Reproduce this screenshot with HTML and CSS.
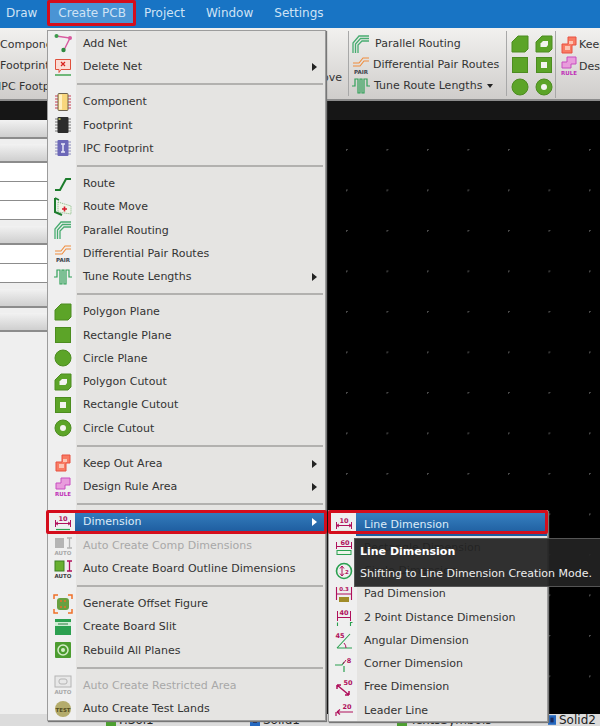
FILE: index.html
```html
<!DOCTYPE html>
<html lang="en">
<head>
<meta charset="utf-8">
<title>Create PCB menu</title>
<link rel="stylesheet" href="styles.css">
</head>
<body>
<svg class="defs" xmlns="http://www.w3.org/2000/svg">
  <symbol id="i-addnet" viewBox="0 0 20 20"><path d="M3 3 17 5 11 17" fill="none" stroke="#d85aa0" stroke-width="1.4"/><circle cx="3.5" cy="3" r="2" fill="#3c9a4c"/><circle cx="17" cy="5" r="2" fill="#d85aa0"/><circle cx="10.500" cy="17" r="2.200" fill="#2f8a40"/></symbol>
  <symbol id="i-delnet" viewBox="0 0 20 20"><path d="M2.500 2.500H17.500V12.500H8L6 15.500V12.500H2.500Z" fill="#fbdcd4" stroke="#e0503c"/><path d="M8 5 12 9M12 5 8 9" stroke="#d8201c" stroke-width="1.200"/><path d="M2 18H18" stroke="#2a9a3c" stroke-width="1.300"/></symbol>
  <symbol id="i-comp" viewBox="0 0 20 20"><path d="M2 4H18M2 7H18M2 10H18M2 13H18M2 16H18" stroke="#c83c50"/><rect x="5" y="1.500" width="10" height="17" rx="1" fill="#f8d67c" stroke="#6c6250"/><rect x="6" y="2.500" width="3" height="15" fill="#fff0c0"/></symbol>
  <symbol id="i-foot" viewBox="0 0 20 20"><path d="M2 4H18M2 7H18M2 10H18M2 13H18M2 16H18" stroke="#777"/><rect x="4.500" y="2" width="11" height="16" rx="1" fill="#2c2c2c"/><rect x="5.500" y="3" width="2" height="2" fill="#a8b050"/></symbol>
  <symbol id="i-ipc" viewBox="0 0 20 20"><path d="M2 4H18M2 7H18M2 10H18M2 13H18M2 16H18" stroke="#8c8cbc"/><rect x="4.500" y="2" width="11" height="16" rx="1" fill="#6c68b8"/><path d="M8 6H12M10 6V14M8 14H12" stroke="#e8e8f8" stroke-width="1.500"/></symbol>
  <symbol id="i-route" viewBox="0 0 20 20"><path d="M2 16H7L13 5H18" fill="none" stroke="#1c7c2c" stroke-width="2"/></symbol>
  <symbol id="i-rmove" viewBox="0 0 20 20"><path d="M5 5 18 9V17L5 15Z" fill="#f0f4e8" stroke="#7cb47c" stroke-dasharray="1 1"/><path d="M2 1V15L9 18" fill="none" stroke="#1c7c2c" stroke-width="2"/><path d="M2 1 6 3" stroke="#1c7c2c" stroke-width="1.500"/><path d="M9 12H14M11.500 9.500V14.500" stroke="#d81c2c" stroke-width="1.600"/></symbol>
  <symbol id="i-par" viewBox="0 0 20 20"><g fill="none" stroke="#48ac70" stroke-width="1.300"><path d="M2 19V9L8 2H18"/><path d="M4.500 19V10L9.500 4.500H18"/><path d="M7 19V11L11 7H18"/></g></symbol>
  <symbol id="i-pair" viewBox="0 0 20 20"><g fill="none" stroke="#f08c3c" stroke-width="1.100"><path d="M2 8H8L12 3H18"/><path d="M2 11H9L13 6H18"/></g><text x="10" y="19" class="svg-tiny" fill="#3c444c" text-anchor="middle">PAIR</text></symbol>
  <symbol id="i-tune" viewBox="0 0 20 20"><path d="M1 10H4V3H7V17H9V3H11V17H13V3H16V10H19" fill="none" stroke="#30a058" stroke-width="1.200"/></symbol>
  <symbol id="i-pplane" viewBox="0 0 20 20"><path d="M2 8 8 2H18V15L15 18H2Z" fill="#5ca428" stroke="#4c8c20"/></symbol>
  <symbol id="i-rplane" viewBox="0 0 20 20"><rect x="2.500" y="2.500" width="15" height="15" fill="#5ca428" stroke="#4c8c20"/></symbol>
  <symbol id="i-cplane" viewBox="0 0 20 20"><circle cx="10" cy="10" r="8" fill="#5ca428" stroke="#4c8c20"/></symbol>
  <symbol id="i-pcut" viewBox="0 0 20 20"><path d="M2 8 8 2H18V15L15 18H2Z" fill="#5ca428" stroke="#4c8c20"/><path d="M6.500 9.500 9 7H14V11L12.500 13H6.500Z" fill="#f4f4f0"/></symbol>
  <symbol id="i-rcut" viewBox="0 0 20 20"><rect x="2.500" y="2.500" width="15" height="15" fill="#5ca428" stroke="#4c8c20"/><rect x="7" y="7" width="6" height="6" fill="#f4f4f0"/></symbol>
  <symbol id="i-ccut" viewBox="0 0 20 20"><circle cx="10" cy="10" r="8" fill="#5ca428" stroke="#4c8c20"/><circle cx="10" cy="10" r="3" fill="#f4f4f0"/></symbol>
  <symbol id="i-keep" viewBox="0 0 20 20"><path d="M9 2H17V10H13V18H3V9H9Z" fill="#f87c64" stroke="#e85040"/><path d="M10 6H14V9H10ZM6 11H11V15H6Z" fill="#fcc4b4"/></symbol>
  <symbol id="i-rule" viewBox="0 0 20 20"><path d="M8 1H17V8H12V12H3V6H8Z" fill="#e89cdc" stroke="#c84cc0"/><text x="10" y="19" class="svg-tiny" fill="#c030b8" text-anchor="middle">RULE</text></symbol>
  <symbol id="i-dim" viewBox="0 0 20 20"><text x="10" y="8.500" class="svg-num" fill="#b0105c" text-anchor="middle">10</text><path d="M2.500 8V15M17.500 8V15M2.500 11.500H17.500M2.500 11.500 5 10M2.500 11.500 5 13M17.500 11.500 15 10M17.500 11.500 15 13" fill="none" stroke="#b0105c" stroke-width="1"/><path d="M3 17.500H17" stroke="#2aa050" stroke-width="1.200"/></symbol>
  <symbol id="i-adim" viewBox="0 0 20 20"><rect x="2" y="3" width="9" height="10" fill="#b4b4b4"/><path d="M14 3H19M14 13H19M16.500 3V13" stroke="#b4b4b4" stroke-width="1.300"/><text x="10" y="19.500" class="svg-tiny" fill="#a8a8a8" text-anchor="middle">AUTO</text></symbol>
  <symbol id="i-bdim" viewBox="0 0 20 20"><rect x="2" y="3" width="9" height="10" fill="#68b030" stroke="#3c8020"/><path d="M14 3H19M14 13H19M16.500 3V13" stroke="#b0105c" stroke-width="1.300"/><text x="10" y="19.500" class="svg-tiny" fill="#404040" text-anchor="middle">AUTO</text></symbol>
  <symbol id="i-offset" viewBox="0 0 20 20"><rect x="4" y="4" width="12" height="12" rx="3" fill="#68a040"/><path d="M1 5V1H5M15 1H19V5M19 15V19H15M5 19H1V15" fill="none" stroke="#f07028" stroke-width="1.500"/><path d="M7 7H9M11 13H13M7 13H9M11 7H13" stroke="#e87028" stroke-width="1.500"/></symbol>
  <symbol id="i-slit" viewBox="0 0 20 20"><rect x="2" y="2" width="16" height="16" fill="#2ca050"/><path d="M2 5H18V9H2Z" fill="#d0ecd4"/><path d="M5 7H15" stroke="#2c7c40"/></symbol>
  <symbol id="i-rebuild" viewBox="0 0 20 20"><rect x="2" y="2" width="16" height="16" rx="1" fill="#4c9c30"/><circle cx="10" cy="10" r="5" fill="none" stroke="#d4ecc8" stroke-width="1.500"/><circle cx="10" cy="10" r="2" fill="#d4ecc8"/></symbol>
  <symbol id="i-arest" viewBox="0 0 20 20"><rect x="2" y="1" width="16" height="11" fill="#e8e8e8" stroke="#b4b4b4"/><rect x="6" y="4" width="8" height="5" rx="2" fill="none" stroke="#b4b4b4"/><text x="10" y="19" class="svg-tiny" fill="#a8a8a8" text-anchor="middle">AUTO</text></symbol>
  <symbol id="i-test" viewBox="0 0 20 20"><circle cx="10" cy="10" r="8" fill="#b4ac6c"/><text x="10" y="12.500" class="svg-tiny" fill="#544c20" text-anchor="middle">TEST</text></symbol>
  <symbol id="i-dimr" viewBox="0 0 20 20"><text x="11" y="8" class="svg-num" fill="#b0105c" text-anchor="middle">60</text><path d="M2.500 5V12M17.500 5V12M2.500 9.500H17.500" fill="none" stroke="#b0105c" stroke-width="1"/><rect x="3" y="13.500" width="14" height="4" fill="#eef4ea" stroke="#2aa050"/></symbol>
  <symbol id="i-dimc" viewBox="0 0 20 20"><circle cx="10" cy="10" r="7.500" fill="none" stroke="#2aa050" stroke-width="1.600"/><path d="M8 5.500V14.500M6 7.500 8 5 10 7.500M6 12.500 8 15 10 12.500" fill="none" stroke="#b0105c" stroke-width="1"/><text x="13" y="12.500" class="svg-tiny" fill="#b0105c" text-anchor="middle">2</text></symbol>
  <symbol id="i-dimp" viewBox="0 0 20 20"><text x="10" y="7" class="svg-tiny" fill="#b0105c" text-anchor="middle">0.3</text><path d="M2.500 3V16M17.500 3V16M2.500 10H17.500" fill="none" stroke="#b0105c" stroke-width="1.100"/><rect x="5" y="13" width="10" height="5" fill="#a08c28"/></symbol>
  <symbol id="i-dim2" viewBox="0 0 20 20"><text x="10" y="8" class="svg-num" fill="#b0105c" text-anchor="middle">40</text><path d="M3.500 4V14M16.500 4V14M3.500 10.500H16.500" fill="none" stroke="#b0105c" stroke-width="1"/><path d="M3.500 15.500V19M16.500 19V15.500H18.500" fill="none" stroke="#2aa050" stroke-width="1.100"/></symbol>
  <symbol id="i-dima" viewBox="0 0 20 20"><text x="6" y="8" class="svg-num" fill="#b0105c" text-anchor="middle">45</text><path d="M3 18H18M3 18 16 4" fill="none" stroke="#2aa050" stroke-width="1.100"/><path d="M10 13Q12 15 12 18" fill="none" stroke="#b0105c"/></symbol>
  <symbol id="i-dimk" viewBox="0 0 20 20"><path d="M1 11H8L10 8M10 12V18" fill="none" stroke="#2aa050" stroke-width="1.200"/><path d="M9 10 12 6" stroke="#b0105c"/><text x="15" y="9" class="svg-num" fill="#b0105c" text-anchor="middle">8</text></symbol>
  <symbol id="i-dimf" viewBox="0 0 20 20"><text x="14" y="8" class="svg-num" fill="#b0105c" text-anchor="middle">50</text><path d="M3 8 15 18M3 8V12M3 8H7M15 18V14M15 18H11" fill="none" stroke="#b0105c" stroke-width="1.500"/></symbol>
  <symbol id="i-diml" viewBox="0 0 20 20"><text x="13" y="9" class="svg-num" fill="#b0105c" text-anchor="middle">20</text><path d="M19 12H3M3 12 6 9.500M3 12 6 14.500M2 12V16" fill="none" stroke="#b0105c" stroke-width="1.200"/></symbol>
  <symbol id="i-solid" viewBox="0 0 10 12"><rect width="10" height="12" fill="#2468c0"/><rect x="3" y="3" width="4" height="6" fill="#1c2c60"/></symbol>
  <symbol id="i-solidg" viewBox="0 0 10 12"><rect width="10" height="12" fill="#4ca030"/></symbol>
</svg>

<div class="app">
  <nav class="topbar">
    <span class="top-item">Draw</span>
    <span class="top-item top-active">Create PCB</span>
    <span class="top-item">Project</span>
    <span class="top-item">Window</span>
    <span class="top-item">Settings</span>
  </nav>

  <div class="ribbon">
    <div class="rb-col rb-left">
      <span>Component</span>
      <span>Footprint</span>
      <span class="rb-ipc">IPC Footprint</span>
    </div>
    <div class="rb-col rb-move">
      <span>Route Move</span>
    </div>
    <div class="rb-col rb-route">
      <div class="rb-row"><svg class="rb-ic"><use href="#i-par"/></svg><span>Parallel Routing</span></div>
      <div class="rb-row rb-tight"><svg class="rb-ic"><use href="#i-pair"/></svg><span>Differential Pair Routes</span></div>
      <div class="rb-row rb-mid"><svg class="rb-ic"><use href="#i-tune"/></svg><span>Tune Route Lengths</span><i class="rb-caret"></i></div>
    </div>
    <div class="rb-grid">
      <svg class="rb-ic"><use href="#i-pplane"/></svg><svg class="rb-ic"><use href="#i-pcut"/></svg>
      <svg class="rb-ic"><use href="#i-rplane"/></svg><svg class="rb-ic"><use href="#i-rcut"/></svg>
      <svg class="rb-ic"><use href="#i-cplane"/></svg><svg class="rb-ic"><use href="#i-ccut"/></svg>
    </div>
    <div class="rb-col rb-keep">
      <div class="rb-row"><svg class="rb-ic"><use href="#i-keep"/></svg><span>Keep Out Area</span></div>
      <div class="rb-row"><svg class="rb-ic"><use href="#i-rule"/></svg><span>Design Rule Area</span></div>
    </div>
  </div>
  <div class="strip"></div>

  <div class="main">
    <aside class="panel">
      <div class="p-head p-gap"></div>
      <div class="p-head"></div>
      <div class="p-white"></div>
      <div class="p-white"></div>
      <div class="p-white p-end"></div>
      <div class="p-head"></div>
      <div class="p-white"></div>
      <div class="p-white p-end"></div>
      <div class="p-head p-gap"></div>
      <div class="p-head"></div>
    </aside>
    <div class="canvas"></div>
  </div>

  <div class="layers">
    <span class="layer layer-1"><svg class="ly-ic"><use href="#i-solidg"/></svg>F.Sol1</span>
    <span class="layer layer-2"><svg class="ly-ic"><use href="#i-solid"/></svg>Solid1</span>
    <span class="layer layer-3"><svg class="ly-ic"><use href="#i-solidg"/></svg>TextsSymbols</span>
    <span class="layer layer-4"><svg class="ly-ic ly-small"><use href="#i-solid"/></svg>Solid2</span>
  </div>

  <div class="menu menu-main">
    <div class="item"><svg class="ic"><use href="#i-addnet"/></svg><span>Add Net</span></div>
    <div class="item has-sub"><svg class="ic"><use href="#i-delnet"/></svg><span>Delete Net</span></div>
    <div class="sep"></div>
    <div class="item"><svg class="ic"><use href="#i-comp"/></svg><span>Component</span></div>
    <div class="item"><svg class="ic"><use href="#i-foot"/></svg><span>Footprint</span></div>
    <div class="item"><svg class="ic"><use href="#i-ipc"/></svg><span>IPC Footprint</span></div>
    <div class="sep"></div>
    <div class="item"><svg class="ic"><use href="#i-route"/></svg><span>Route</span></div>
    <div class="item"><svg class="ic"><use href="#i-rmove"/></svg><span>Route Move</span></div>
    <div class="item"><svg class="ic"><use href="#i-par"/></svg><span>Parallel Routing</span></div>
    <div class="item"><svg class="ic"><use href="#i-pair"/></svg><span>Differential Pair Routes</span></div>
    <div class="item has-sub"><svg class="ic"><use href="#i-tune"/></svg><span>Tune Route Lengths</span></div>
    <div class="sep"></div>
    <div class="item"><svg class="ic"><use href="#i-pplane"/></svg><span>Polygon Plane</span></div>
    <div class="item"><svg class="ic"><use href="#i-rplane"/></svg><span>Rectangle Plane</span></div>
    <div class="item"><svg class="ic"><use href="#i-cplane"/></svg><span>Circle Plane</span></div>
    <div class="item"><svg class="ic"><use href="#i-pcut"/></svg><span>Polygon Cutout</span></div>
    <div class="item"><svg class="ic"><use href="#i-rcut"/></svg><span>Rectangle Cutout</span></div>
    <div class="item"><svg class="ic"><use href="#i-ccut"/></svg><span>Circle Cutout</span></div>
    <div class="sep"></div>
    <div class="item has-sub"><svg class="ic"><use href="#i-keep"/></svg><span>Keep Out Area</span></div>
    <div class="item has-sub"><svg class="ic"><use href="#i-rule"/></svg><span>Design Rule Area</span></div>
    <div class="sep"></div>
    <div class="item has-sub selected"><svg class="ic"><use href="#i-dim"/></svg><span>Dimension</span></div>
    <div class="item disabled"><svg class="ic"><use href="#i-adim"/></svg><span>Auto Create Comp Dimensions</span></div>
    <div class="item"><svg class="ic"><use href="#i-bdim"/></svg><span>Auto Create Board Outline Dimensions</span></div>
    <div class="sep"></div>
    <div class="item"><svg class="ic"><use href="#i-offset"/></svg><span>Generate Offset Figure</span></div>
    <div class="item"><svg class="ic"><use href="#i-slit"/></svg><span>Create Board Slit</span></div>
    <div class="item"><svg class="ic"><use href="#i-rebuild"/></svg><span>Rebuild All Planes</span></div>
    <div class="sep"></div>
    <div class="item disabled"><svg class="ic"><use href="#i-arest"/></svg><span>Auto Create Restricted Area</span></div>
    <div class="item"><svg class="ic"><use href="#i-test"/></svg><span>Auto Create Test Lands</span></div>
  </div>

  <div class="menu menu-sub">
    <div class="item selected"><svg class="ic"><use href="#i-dim"/></svg><span>Line Dimension</span></div>
    <div class="item"><svg class="ic"><use href="#i-dimr"/></svg><span>Rectangle Dimension</span></div>
    <div class="item"><svg class="ic"><use href="#i-dimc"/></svg><span>Circle Dimension</span></div>
    <div class="item"><svg class="ic"><use href="#i-dimp"/></svg><span>Pad Dimension</span></div>
    <div class="item"><svg class="ic"><use href="#i-dim2"/></svg><span>2 Point Distance Dimension</span></div>
    <div class="item"><svg class="ic"><use href="#i-dima"/></svg><span>Angular Dimension</span></div>
    <div class="item"><svg class="ic"><use href="#i-dimk"/></svg><span>Corner Dimension</span></div>
    <div class="item"><svg class="ic"><use href="#i-dimf"/></svg><span>Free Dimension</span></div>
    <div class="item"><svg class="ic"><use href="#i-diml"/></svg><span>Leader Line</span></div>
  </div>

  <div class="mark mark-dim"></div>
  <div class="mark mark-line"></div>

  <div class="tooltip">
    <strong>Line Dimension</strong>
    <span>Shifting to Line Dimension Creation Mode.</span>
  </div>
</div>
</body>
</html>
```
FILE: styles.css
```css
* { box-sizing: border-box; }
html, body { margin: 0; padding: 0; background: #000; }
body { font-family: "DejaVu Sans", Verdana, sans-serif; font-size: 11px; color: #333; }
.defs { position: absolute; width: 0; height: 0; }
.svg-tiny { font: bold 5.5px "DejaVu Sans", sans-serif; }
.svg-num { font: bold 6.5px "DejaVu Sans", sans-serif; }

.app { position: relative; width: 600px; height: 726px; overflow: hidden; display: flex; flex-direction: column; background: #000; }

.topbar { height: 28px; flex: none; background: #1874c4; display: flex; align-items: flex-start; font-size: 12px; color: #cfe3f5; padding-left: 6px; }
.top-item { height: 26px; line-height: 26px; margin-right: 21px; }
.top-active { background: #4a94d4; margin: 0 8px 0 -11px; padding: 0 7px 0 8px; border: 3px solid #d40d1c; border-radius: 2px; line-height: 20px; }

.ribbon { height: 73px; flex: none; background: linear-gradient(#f2f1ef, #cfcdcb); border-bottom: 2px solid #8c8c8c; display: flex; position: relative; overflow: hidden; }
.rb-col { display: flex; flex-direction: column; white-space: nowrap; }
.rb-left { width: 290px; flex: none; overflow: hidden; gap: 8px; padding-top: 10px; }
.rb-ipc { margin-left: -2px; }
.rb-move { width: 59px; flex: none; align-items: flex-end; justify-content: flex-end; padding: 0 6px 12px 0; overflow: hidden; border-right: 1px solid #a8a8a8; margin: 3px 0; }
.rb-route { width: 158px; flex: none; border-right: 1px solid #a8a8a8; margin: 3px 0; padding-top: 2px; }
.rb-row { display: flex; align-items: center; height: 22px; gap: 4px; padding-left: 2px; }
.rb-tight { gap: 2px; }
.rb-mid { gap: 3px; }
.rb-ic { width: 20px; height: 20px; flex: none; }
.rb-caret { width: 0; height: 0; border: 3px solid transparent; border-top: 4px solid #222; margin: 3px 0 0 2px; }
.rb-grid { width: 49px; flex: none; display: grid; grid-template-columns: 24px 24px; grid-auto-rows: 21.5px; align-items: center; padding: 2px 0 0 2.5px; border-right: 1px solid #a8a8a8; margin: 3px 0; height: 67px; }
.rb-keep { padding-top: 6px; }
.rb-keep .rb-row { height: 21.5px; gap: 0; padding-left: 3px; }

.strip { height: 19px; flex: none; background: #161616; }

.main { flex: 1; display: flex; min-height: 0; }
.panel { width: 47px; flex: none; background: #efefef; display: flex; flex-direction: column; }
.p-head { height: 19px; flex: none; background: linear-gradient(#f2f2f2, #cfcfcf); border-bottom: 2px solid #8c8c8c; }
.p-gap { margin-bottom: 5px; }
.p-white { height: 19px; flex: none; background: #fff; border-bottom: 1px solid #8c8c8c; }
.p-end { margin-bottom: 6px; }
.canvas { flex: 1; background-color: #000; background-image: radial-gradient(circle at 0.75px 0.75px, #4a4a4a 0.75px, transparent 1px); background-size: 40.5px 40.5px; background-position: 15.5px 29px; }

.layers { height: 12px; flex: none; background: #dcdcdc; display: flex; font-size: 12px; line-height: 13px; color: #222; overflow: hidden; position: relative; }
.layer { display: flex; align-items: flex-start; gap: 3px; flex: none; }
.layer-1 { margin-left: 106px; width: 144px; }
.layer-2 { width: 147px; }
.layer-3 { width: 151px; }
.ly-ic { width: 10px; height: 12px; flex: none; }
.ly-small { width: 8px; }

.menu { position: absolute; background: linear-gradient(90deg, #efefef 28px, #e5e4e2 28px); border: 1px solid #9c9c9c; box-shadow: 1px 1px 1px #777; display: flex; flex-direction: column; }
.menu-main { left: 47px; top: 30px; width: 279px; height: 691px; padding-top: 0.75px; }
.menu-sub { left: 328px; top: 510px; width: 220px; height: 212px; padding-top: 1.5px; }
.item { position: relative; height: 23.25px; flex: none; display: flex; align-items: center; padding-left: 5px; white-space: nowrap; }
.ic { width: 20px; height: 20px; flex: none; margin-right: 10px; }
.item span { position: relative; }
.has-sub::after { content: ""; position: absolute; right: 8px; top: 8px; width: 0; height: 0; border: 4px solid transparent; border-left: 5px solid #222; border-right: 0; }
.selected { color: #dcebf8; }
.selected::before { content: ""; position: absolute; left: 27px; right: 0; top: 0; bottom: 0; background: linear-gradient(#3680c0, #1c5a9c); }
.selected .ic { position: relative; }
.selected.has-sub::after { border-left-color: #fff; }
.disabled { color: #a8a8a8; }
.sep { height: 12px; flex: none; margin: 0 2px 0 29px; position: relative; }
.sep::before { content: ""; position: absolute; left: 0; right: 0; top: 5px; height: 2px; background: #b2b1af; }

.mark { position: absolute; border: 3px solid #d40d1c; border-radius: 2px; pointer-events: none; }
.mark-dim { left: 46px; top: 510px; width: 281px; height: 24px; }
.mark-line { left: 328px; top: 510px; width: 220px; height: 24px; }

.tooltip { position: absolute; left: 354px; top: 538px; width: 248px; height: 49px; background: rgba(34, 34, 34, 0.93); border: 1px solid #555; color: #eee; display: flex; flex-direction: column; gap: 9px; padding: 6px 0 0 5px; white-space: nowrap; }
.tooltip strong { color: #fff; }
```
